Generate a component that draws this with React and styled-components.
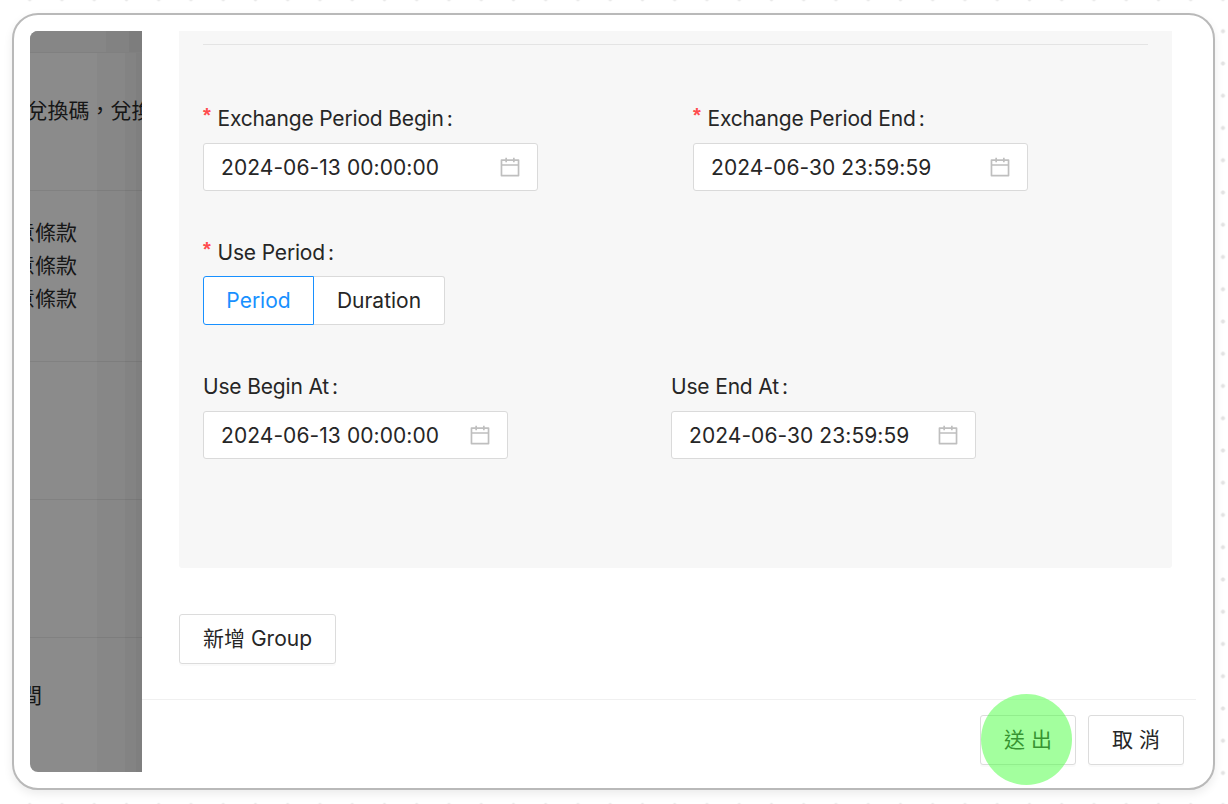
import React from "react";
import styled, { createGlobalStyle } from "styled-components";

const GlobalStyle = createGlobalStyle`
  *, *::before, *::after { box-sizing: border-box; }
  body {
    margin: 0;
    background: #fff;
    color: #262626;
    font-family: Inter, "Noto Sans CJK TC", sans-serif;
    font-size: 21px;
    line-height: 33px;
    overflow: hidden;
  }
`;

const Canvas = styled.main`
  width: 1228px;
  height: 804px;
  padding: 13px 13px 14px 12px;
  overflow: hidden;
  background-color: #fff;
  background-image: radial-gradient(circle, #e3e3e3 1.7px, transparent 2.4px);
  background-size: 32.25px 32.25px;
  background-position: 13.6px 15.1px;
`;

const Frame = styled.section`
  width: 1203px;
  height: 777px;
  padding: 16px;
  border: 2px solid #b9b9b9;
  border-radius: 26px;
  background: #fff;
  box-shadow: 0 4px 10px rgba(0, 0, 0, 0.08);
`;

const Screen = styled.div`
  display: flex;
  width: 1166px;
  height: 741px;
`;

const Backdrop = styled.aside`
  flex: none;
  width: 112px;
  overflow: hidden;
  border-radius: 8px 0 0 8px;
  color: #161616;
  background: linear-gradient(to right, #8b8b8b 67px, #878787 67px 95px, #838383 95px 106px, #7f7f7f 106px);
`;

const BackdropHeader = styled.div`
  height: 22px;
  border-bottom: 1px solid #808080;
  background: linear-gradient(to right, #868686 76px, #828282 76px 99px, #7d7d7d 99px);
`;

const BackdropRow = styled.div`
  display: flex;
  flex-direction: column;
  height: ${(p) => p.$height}px;
  padding-top: ${(p) => p.$top || 0}px;
  border-bottom: ${(p) => (p.$last ? "0" : "1px solid rgba(0, 0, 0, 0.07)")};
`;

const BackdropText = styled.span`
  margin-left: ${(p) => p.$shift}px;
  line-height: 33.4px;
  white-space: nowrap;
`;

const Drawer = styled.div`
  flex: 1;
  display: flex;
  flex-direction: column;
  background: #fff;
`;

const Body = styled.div`
  height: 668px;
  padding: 0 24px 0 37px;
`;

const Card = styled.div`
  height: 537px;
  padding: 13px 24px 0;
  border-radius: 0 0 3px 3px;
  background: #f7f7f7;
`;

const Divider = styled.hr`
  height: 1px;
  margin: 0 0 57px;
  border: 0;
  background: #e4e4e4;
`;

const FieldRow = styled.div`
  display: grid;
  grid-template-columns: ${(p) => p.$first}px 1fr;
  height: 134px;
`;

const Field = styled.div`
  display: flex;
  flex-direction: column;
  align-items: flex-start;
`;

const Label = styled.label`
  display: flex;
  height: ${(p) => (p.$compact ? 40 : 41)}px;
  line-height: 33px;
  white-space: pre;
  letter-spacing: -0.17px;
`;

const Required = styled.span`
  width: 14.5px;
  color: #ff4d4f;
  font-family: "Liberation Sans", sans-serif;
  font-size: 20px;
  font-weight: 700;
  line-height: 26px;
  letter-spacing: 0;
`;

const Colon = styled.span`
  margin-left: 3px;
`;

const DateInput = styled.div`
  display: flex;
  align-items: center;
  justify-content: space-between;
  width: ${(p) => p.$width}px;
  height: 48px;
  padding: 0 15px 0 17px;
  border: 1px solid #dadada;
  border-radius: 3px;
  background: #fff;
`;

const DateText = styled.span`
  padding-top: 1px;
  letter-spacing: 0.07px;
  white-space: nowrap;
`;

const Segments = styled.div`
  display: flex;
`;

const Segment = styled.button`
  width: ${(p) => p.$width}px;
  height: 49px;
  padding: 0;
  border: 1px solid ${(p) => (p.$active ? "#1890ff" : "#dadada")};
  border-left-width: ${(p) => (p.$active ? 1 : 0)}px;
  border-radius: ${(p) => (p.$active ? "3px 0 0 3px" : "0 3px 3px 0")};
  background: #fff;
  color: ${(p) => (p.$active ? "#1890ff" : "#262626")};
  font: inherit;
`;

const Button = styled.button`
  width: ${(p) => p.$width}px;
  height: 50px;
  padding: 0 0 1px;
  border: 1px solid #dcdcdc;
  border-radius: 3px;
  background: #fff;
  color: #262626;
  font: inherit;
  white-space: nowrap;
  box-shadow: 0 2px 0 rgba(0, 0, 0, 0.02);
`;

const AddButton = styled(Button)`
  margin-top: 46px;
`;

const Footer = styled.footer`
  display: flex;
  justify-content: flex-end;
  gap: 12px;
  height: 73px;
  padding: 15px 12px 0 0;
  border-top: 1px solid #f0f0f0;
`;

const Target = styled.div`
  position: relative;
  height: 50px;
`;

const Highlight = styled.span`
  position: absolute;
  left: 1px;
  top: -21px;
  width: 91px;
  height: 91px;
  border-radius: 50%;
  background: rgba(72, 255, 62, 0.5);
`;

function CalendarIcon() {
  return (
    <svg width="24" height="24" viewBox="0 0 1024 1024" fill="#bfbfbf" aria-hidden="true">
      <path d="M880 184H712v-64c0-4.400-3.600-8-8-8h-56c-4.400 0-8 3.600-8 8v64H384v-64c0-4.400-3.600-8-8-8h-56c-4.400 0-8 3.600-8 8v64H144c-17.700 0-32 14.300-32 32v664c0 17.700 14.300 32 32 32h736c17.700 0 32-14.300 32-32V216c0-17.700-14.300-32-32-32zm-40 656H184V460h656v380zM184 392V256h128v48c0 4.400 3.600 8 8 8h56c4.400 0 8-3.600 8-8v-48h256v48c0 4.400 3.600 8 8 8h56c4.400 0 8-3.600 8-8v-48h128v136H184z" />
    </svg>
  );
}

function DateField({ label, value, width, required }) {
  return (
    <Field>
      <Label>
        {required && <Required>*</Required>}
        {label}
        <Colon>:</Colon>
      </Label>
      <DateInput $width={width}>
        <DateText>{value}</DateText>
        <CalendarIcon />
      </DateInput>
    </Field>
  );
}

export default function App() {
  return (
    <>
      <GlobalStyle />
      <Canvas>
        <Frame>
          <Screen>
            <Backdrop>
              <BackdropHeader />
              <BackdropRow $height={138} $top={41}>
                <BackdropText $shift={-3.5}>兌換碼，兌換</BackdropText>
              </BackdropRow>
              <BackdropRow $height={171} $top={24.5}>
                <BackdropText $shift={-16}>意條款</BackdropText>
                <BackdropText $shift={-16}>意條款</BackdropText>
                <BackdropText $shift={-16}>意條款</BackdropText>
              </BackdropRow>
              <BackdropRow $height={138} />
              <BackdropRow $height={138} />
              <BackdropRow $height={134} $top={41} $last>
                <BackdropText $shift={-9}>間</BackdropText>
              </BackdropRow>
            </Backdrop>
            <Drawer>
              <Body>
                <Card>
                  <Divider />
                  <FieldRow $first={490}>
                    <DateField required label="Exchange Period Begin" value="2024-06-13 00:00:00" width={335} />
                    <DateField required label="Exchange Period End" value="2024-06-30 23:59:59" width={335} />
                  </FieldRow>
                  <FieldRow $first={490}>
                    <Field>
                      <Label $compact>
                        <Required>*</Required>
                        Use Period
                        <Colon>:</Colon>
                      </Label>
                      <Segments>
                        <Segment $active $width={111}>Period</Segment>
                        <Segment $width={131}>Duration</Segment>
                      </Segments>
                    </Field>
                  </FieldRow>
                  <FieldRow $first={468}>
                    <DateField label="Use Begin At" value="2024-06-13 00:00:00" width={305} />
                    <DateField label="Use End At" value="2024-06-30 23:59:59" width={305} />
                  </FieldRow>
                </Card>
                <AddButton $width={157}>新增 Group</AddButton>
              </Body>
              <Footer>
                <Target>
                  <Button $width={96}>送 出</Button>
                  <Highlight />
                </Target>
                <Button $width={96}>取 消</Button>
              </Footer>
            </Drawer>
          </Screen>
        </Frame>
      </Canvas>
    </>
  );
}
